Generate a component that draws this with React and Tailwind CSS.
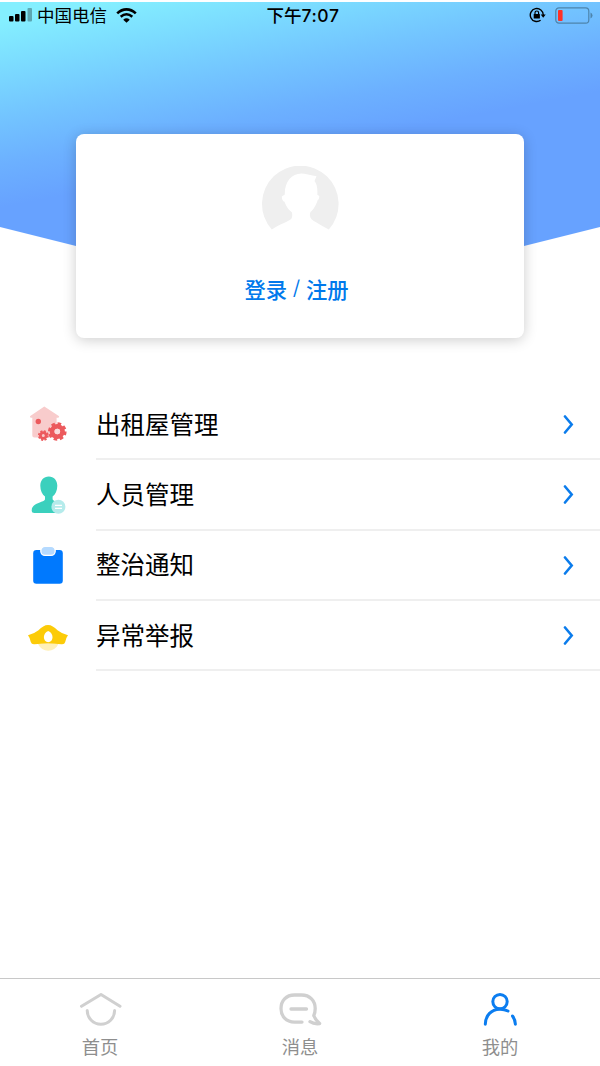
import React, { useState } from 'react';

const HouseGearIcon = () => (
  <svg width="40" height="38" viewBox="0 0 40 38" fill="none">
    <path d="M16.300 .5 31.200 10.300 30.500 11.800H28.600V29.500Q28.600 31.500 26.600 31.500H6.300Q4.300 31.500 4.300 29.500V11.800H2.500L1.900 10.300Z" fill="#f8cccc" />
    <circle cx="10.300" cy="15.500" r="2.700" fill="#ec5a5d" />
    {/* big gear */}
    <circle cx="29.300" cy="25.500" r="5.200" stroke="#ec5a5d" strokeWidth="4.800" />
    <circle cx="29.300" cy="25.500" r="8" stroke="#ec5a5d" strokeWidth="2.600" strokeDasharray="3.600 2.683" />
    <circle cx="29.300" cy="25.500" r="2.800" fill="#fbdcdc" />
    {/* small gear */}
    <circle cx="15.300" cy="29.500" r="2.900" stroke="#ec5a5d" strokeWidth="2.800" />
    <circle cx="15.300" cy="29.500" r="4.600" stroke="#ec5a5d" strokeWidth="1.600" strokeDasharray="2.100 1.513" />
  </svg>
);

const PersonCardIcon = () => (
  <svg width="36" height="40" viewBox="0 0 36 40">
    <path d="M18.800 1.500C23.900 1.500 27.300 5.300 27.300 10.800C27.300 16 25.300 19.400 22.600 21.600V24.300C23 26.500 30 27 32.500 32V38H4.500Q1.700 38 1.700 35.500C1.700 27.500 15 27.500 15 24.300V21.600C12.300 19.400 10.300 16 10.300 10.800C10.300 5.300 13.700 1.500 18.800 1.500Z" fill="#3bd0bd" />
    <path d="M28 38.500V32H34V38.500Z" fill="#fff" />
    <circle cx="28.400" cy="31.800" r="7" fill="#b5ebeb" />
    <path d="M25 30.300H32M25 33.300H32" stroke="#fff" strokeWidth="1.300" />
  </svg>
);

const ClipboardIcon = () => (
  <svg width="32" height="40" viewBox="0 0 32 40">
    <rect x="1.200" y="4" width="29.600" height="33.800" rx="3.200" fill="#0079fe" />
    <rect x="8.800" y=".4" width="14.400" height="9" rx="4.200" fill="#b5daff" stroke="#fff" strokeWidth="1.300" />
  </svg>
);

const BadgeIcon = () => (
  <svg width="42" height="31" viewBox="0 -3 42 31">
    <path d="M11 20H31.500Q28 26.700 21.200 26.700Q14.500 26.700 11 20Z" fill="#fff0b8" />
    <path d="M1 11.200Q7.500 9.500 11.500 6.200C15 3 17.500 1 21 1C24.500 1 27 3 30.500 6.200Q34.500 9.500 41 11.200Q38.800 14 38.200 18Q37.600 20.600 34.500 20.300Q21 18.900 7.500 20.300Q4.500 20.600 3.800 18Q3.200 14 1 11.200Z" fill="#fccb08" />
    <path d="M21.200 7C24 8 25.500 10.500 25.500 13C25.500 16 23.700 18.200 21.200 18.200C18.700 18.200 16.900 16 16.900 13C16.900 10.500 18.400 8 21.200 7Z" fill="#fff" />
  </svg>
);

const HomeIcon = () => (
  <svg width="44" height="36" viewBox="0 0 44 36" fill="none" stroke="currentColor" strokeWidth="3" strokeLinecap="round" strokeLinejoin="round">
    <path d="M3.500 15.300 23 3.500 42 15.300M9.200 19.500A13.700 13.700 0 0 0 36.600 19.500" />
  </svg>
);

const MessageIcon = () => (
  <svg width="44" height="36" viewBox="0 0 44 36" fill="none" stroke="currentColor" strokeWidth="3.300" strokeLinecap="round" strokeLinejoin="round">
    <path d="M24 31.100H16.500C8 31.100 3 25 3 17.600C3 10 8 4 16.500 4H23.500C32 4 37.200 10 37.200 17.600C37.200 21.500 36.500 23 35.800 24.500Q37 28.500 41.600 32.600Q36 33.300 32 30.700M13 18H28.500" />
  </svg>
);

const MineIcon = () => (
  <svg width="44" height="36" viewBox="0 0 44 36" fill="none" stroke="currentColor" strokeWidth="3" strokeLinecap="round">
    <circle cx="22" cy="10.600" r="7.200" />
    <path d="M7.300 33.300C7.500 24.200 13.500 18.400 21.500 18.200Q26 18 30 20M34.500 25Q37.300 28.600 37.400 33.300" />
  </svg>
);

const menuItems = [
  { label: '出租屋管理', Icon: HouseGearIcon },
  { label: '人员管理', Icon: PersonCardIcon },
  { label: '整治通知', Icon: ClipboardIcon },
  { label: '异常举报', Icon: BadgeIcon },
];

const tabs = [
  { id: 'home', label: '首页', Icon: HomeIcon },
  { id: 'message', label: '消息', Icon: MessageIcon },
  { id: 'mine', label: '我的', Icon: MineIcon },
];

function StatusBar() {
  return (
    <div className="grid h-[26px] grid-cols-3 items-center pl-[9px] pr-[7px] text-black">
      <div className="flex items-center">
        <svg width="24" height="14" viewBox="0 0 24 14">
          <rect x="0" y="8" width="4.500" height="5.500" rx="1" />
          <rect x="6" y="6" width="4.500" height="7.500" rx="1" />
          <rect x="12" y="3" width="4.500" height="10.500" rx="1" />
          <rect x="18.500" y="0" width="4.500" height="13.500" rx="1" opacity=".3" />
        </svg>
        <span className="ml-1 text-[17.5px] leading-none">中国电信</span>
        <svg className="ml-[9px]" width="21" height="15" viewBox="0 0 21 15" fill="none" stroke="#000" strokeWidth="2.600">
          <path d="M1.200 5.400Q5.500 1.400 10.500 1.400Q15.500 1.400 19.800 5.400M4.700 8.700Q7.500 6.300 10.500 6.300Q13.500 6.300 16.300 8.700" />
          <path d="M7.200 11.700Q10.500 8.900 13.800 11.700L10.500 14.800Z" fill="#000" stroke="none" />
        </svg>
      </div>
      <div className="pl-1 text-center text-[17.5px] font-medium leading-none">
        下午<span className="font-['Inter'] tracking-[0.6px]">7:07</span>
      </div>
      <div className="flex items-center justify-end gap-[9px]">
        <svg width="17" height="16" viewBox="0 0 17 16" fill="none" stroke="#000" strokeWidth="1.400">
          <path d="M11.600 13.300A6.500 6.500 0 1 1 14.300 8" />
          <path d="M11.700 7.500H16.700L14.200 10.700Z" fill="#000" stroke="none" />
          <rect x="4.700" y="7" width="6.200" height="4.600" rx=".5" fill="#000" stroke="none" />
          <path d="M6 7.500V5.800A1.800 1.800 0 0 1 9.600 5.800V7.500" strokeWidth="1.200" />
        </svg>
        <svg width="38" height="17" viewBox="0 0 38 17">
          <rect x=".8" y=".8" width="33" height="15.400" rx="3.200" fill="none" stroke="#4d84ac" strokeWidth="1.200" />
          <rect x="3" y="3" width="4.600" height="11" rx="1" fill="#ff3127" />
          <path d="M35.500 5.500Q37.500 6.500 37.500 8.500Q37.500 10.500 35.500 11.500Z" fill="#4d84ac" />
        </svg>
      </div>
    </div>
  );
}

export default function App() {
  const [active, setActive] = useState('mine');

  return (
    <div className="flex h-[1066px] w-[600px] flex-col overflow-hidden bg-white font-['Noto_Sans_CJK_SC',sans-serif]">
      <header className="relative h-[390px] shrink-0 pt-[2px]">
        <div className="absolute inset-x-0 top-[2px] h-[300px] bg-[linear-gradient(169deg,#84efff_20px,#7bdbff_65px,#73c5ff_112px,#6cb0ff_160px,#67a2ff_202px)] [clip-path:polygon(0_0,100%_0,100%_225px,50%_300px,0_225px)]" />
        <div className="relative">
          <StatusBar />
          <section className="mx-auto mt-[106px] flex h-[204px] w-[448px] flex-col items-center rounded-lg bg-white pt-8 shadow-[0_2px_14px_rgba(0,0,0,0.2)]">
            <svg width="78" height="68" viewBox="0 0 78 68">
              <path d="M10.800 63.500A38.300 38.300 0 1 1 67.800 63.500Q61 60 55.500 56.500Q49.300 53.500 49 50Q48.600 47.500 49.500 46C52.500 44 55.500 38 56.500 34.500Q58.500 33.500 58.300 30L56.300 28.800Q57 19 53.500 15L55.500 10.300Q50 9.300 46 8.300C33 4.500 23.300 14 23.800 28.500L20.800 30.500Q21 35 23.500 35.800Q26 43 31 46.500Q31.700 50.500 30.500 52.500C28 55.500 18 58.500 10.800 63.500Z" fill="#efefef" />
            </svg>
            <button className="mt-[39px] mr-[7px] flex items-start text-[21.3px] font-medium leading-8 text-[#0079ec]">
              <span>登录</span>
              <span className="-mt-[3px] w-[19px] text-center text-[18px]">/</span>
              <span>注册</span>
            </button>
          </section>
        </div>
      </header>

      <main className="flex-1">
        {menuItems.map(({ label, Icon }) => (
          <button key={label} className="flex h-[70.3px] w-full items-stretch text-left">
            <span className="flex w-24 items-center justify-center"><Icon /></span>
            <span className="flex flex-1 items-center justify-between border-b-2 border-[#efefef] pr-[26px]">
              <span className="text-[24.5px] leading-none text-black">{label}</span>
              <svg width="12" height="20" viewBox="0 0 12 20" fill="none" stroke="#0b7cec" strokeWidth="2.600" strokeLinecap="round">
                <path d="M3 2.500 9.700 10.500 3 18.500" />
              </svg>
            </span>
          </button>
        ))}
      </main>

      <nav className="grid h-[88px] shrink-0 grid-cols-3 border-t border-[#c8c8c8]">
        {tabs.map(({ id, label, Icon }) => (
          <button key={id} onClick={() => setActive(id)} className="flex flex-col items-center pt-3">
            <span className={active === id ? 'text-[#0b7df0]' : 'text-[#d0d0d0]'}><Icon /></span>
            <span className="mt-[10px] text-[18.3px] leading-none text-[#8e8e8e]">{label}</span>
          </button>
        ))}
      </nav>
    </div>
  );
}
